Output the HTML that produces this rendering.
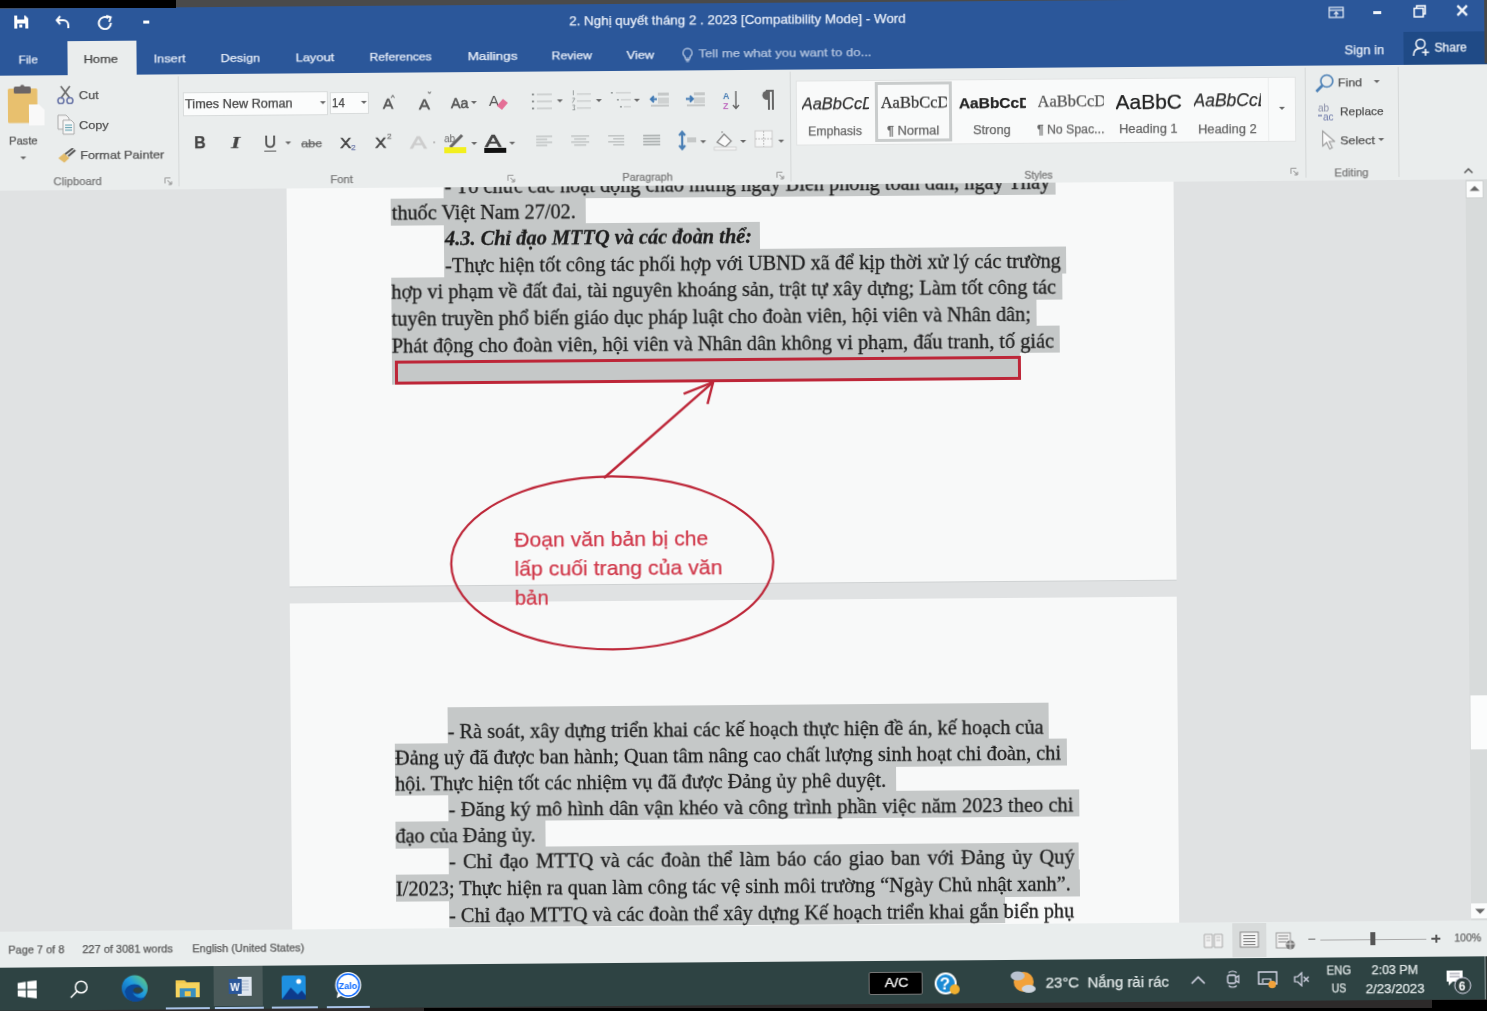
<!DOCTYPE html><html><head><meta charset="utf-8"><style>html,body{margin:0;padding:0;}body{width:1487px;height:1011px;overflow:hidden;background:#000;position:relative;}#bgtop{position:absolute;left:0;top:0;width:176px;height:7.5px;background:#000;z-index:5;}#bgbot{position:absolute;left:423.5px;top:1007.5px;width:1064px;height:4px;background:#000;z-index:5;}#bgbr{position:absolute;left:1432px;top:999.5px;width:55px;height:12px;background:#000;z-index:5;}#scr{position:absolute;left:0;top:0;width:1487px;height:1011px;transform:rotate(-0.44deg);transform-origin:743.5px 505.5px;filter:blur(0.45px);}.t{position:absolute;white-space:pre;line-height:1;transform-origin:0 0;-webkit-text-stroke-width:0.25px;}.b{position:absolute;}</style></head><body><div id="bgtop"></div><div id="bgbot"></div><div id="bgbr"></div><div id="scr"><div class="b" style="left:-20.0px;top:183.0px;width:1527.0px;height:744.0px;background:#e0e2e3;"></div><div class="b" style="left:289.2px;top:184.3px;width:887.0px;height:398.5px;background:#f8f9f9;"></div><div class="b" style="left:289.2px;top:582.8px;width:887.0px;height:1.2px;background:#cfd2d3;"></div><div class="b" style="left:289.2px;top:600.3px;width:887.0px;height:329.7px;background:#f8f9f9;"></div><div class="b" style="left:1468.0px;top:184.3px;width:39.0px;height:742.7px;background:#d8dbdb;"></div><div class="b" style="left:1468.0px;top:185.5px;width:18.0px;height:18.0px;background:#fbfcfc;border:1px solid #cfd2d2;box-sizing:border-box;"></div><div class="b" style="left:1468.5px;top:701.4px;width:18.5px;height:53.8px;background:#fbfcfc;"></div><div class="b" style="left:1468.0px;top:908.6px;width:18.0px;height:15.9px;background:#fbfcfc;"></div><div class="b" style="left:446.2px;top:169.7px;width:612.2px;height:27.1px;background:#c5c8c8;"></div><div class="b" style="left:392.8px;top:195.5px;width:195.3px;height:27.1px;background:#c5c8c8;"></div><div class="b" style="left:446.2px;top:222.0px;width:316.0px;height:27.1px;background:#c5c8c8;"></div><div class="b" style="left:446.2px;top:248.6px;width:621.5px;height:27.1px;background:#c5c8c8;"></div><div class="b" style="left:392.8px;top:275.1px;width:670.8px;height:27.1px;background:#c5c8c8;"></div><div class="b" style="left:392.8px;top:301.6px;width:645.2px;height:27.1px;background:#c5c8c8;"></div><div class="b" style="left:392.8px;top:328.2px;width:668.0px;height:27.1px;background:#c5c8c8;"></div><div class="b" style="left:392.8px;top:354.7px;width:628.2px;height:27.1px;background:#c5c8c8;"></div><div class="b" style="left:446.0px;top:705.0px;width:600.7px;height:37.1px;background:#c5c8c8;"></div><div class="b" style="left:392.6px;top:741.1px;width:672.6px;height:27.1px;background:#c5c8c8;"></div><div class="b" style="left:392.6px;top:766.3px;width:501.8px;height:27.1px;background:#c5c8c8;"></div><div class="b" style="left:446.0px;top:792.2px;width:631.0px;height:27.1px;background:#c5c8c8;"></div><div class="b" style="left:392.6px;top:818.6px;width:150.9px;height:27.1px;background:#c5c8c8;"></div><div class="b" style="left:446.0px;top:845.0px;width:630.0px;height:27.1px;background:#c5c8c8;"></div><div class="b" style="left:392.6px;top:871.8px;width:684.4px;height:27.1px;background:#c5c8c8;"></div><div class="b" style="left:446.0px;top:898.2px;width:555.6px;height:27.1px;background:#c5c8c8;"></div><div class="b" style="left:395.9px;top:357.8px;width:626.0px;height:23.8px;background:transparent;border:3px solid #bd2638;box-sizing:border-box;"></div><svg class="b" style="left:1472.0px;top:191.0px;" width="10" height="6" viewBox="0 0 10 6"><path d="M0 5.5L5 0.5 10 5.5z" fill="#666"/></svg><svg class="b" style="left:1472.0px;top:914.0px;" width="10" height="6" viewBox="0 0 10 6"><path d="M0 0.5L5 5.5 10 0.5z" fill="#666"/></svg><svg class="b" style="left:440.0px;top:370.0px;" width="340" height="290" viewBox="0 0 340 290"><ellipse cx="171.79999999999995" cy="191.79999999999995" rx="161" ry="86.5" stroke="#bd2638" stroke-width="2.2" fill="none"/><path d="M164.10000000000002 107L274.1 11.899999999999977" stroke="#bd2638" stroke-width="2.4" fill="none"/><path d="M244.5 23.399999999999977L274.1 11.899999999999977L268.29999999999995 33.69999999999999" stroke="#bd2638" stroke-width="2.4" fill="none"/></svg><div class="t" id="d0" style="left:446.9px;top:174.0px;font-size:20.3px;font-family:'Liberation Serif', serif;color:#1e1e1e;font-weight:normal;font-style:normal;transform:scaleX(1.0005);-webkit-text-stroke:0.3px #1e1e1e;">- Tổ chức các hoạt động chào mừng ngày Biên phòng toàn dân, ngày Thầy</div><div class="t" id="d1" style="left:393.6px;top:199.8px;font-size:20.3px;font-family:'Liberation Serif', serif;color:#1e1e1e;font-weight:normal;font-style:normal;transform:scaleX(0.9984);-webkit-text-stroke:0.3px #1e1e1e;">thuốc Việt Nam 27/02.</div><div class="t" id="d2" style="left:446.9px;top:226.3px;font-size:20.3px;font-family:'Liberation Serif', serif;color:#1e1e1e;font-weight:bold;font-style:italic;transform:scaleX(1.0039);-webkit-text-stroke:0.3px #1e1e1e;">4.3. Chỉ đạo MTTQ và các đoàn thể:</div><div class="t" id="d3" style="left:446.5px;top:252.9px;font-size:20.3px;font-family:'Liberation Serif', serif;color:#1e1e1e;font-weight:normal;font-style:normal;transform:scaleX(1.0004);-webkit-text-stroke:0.3px #1e1e1e;">-Thực hiện tốt công tác phối hợp với UBND xã để kịp thời xử lý các trường</div><div class="t" id="d4" style="left:393.3px;top:279.4px;font-size:20.3px;font-family:'Liberation Serif', serif;color:#1e1e1e;font-weight:normal;font-style:normal;transform:scaleX(0.9994);-webkit-text-stroke:0.3px #1e1e1e;">hợp vi phạm về đất đai, tài nguyên khoáng sản, trật tự xây dựng; Làm tốt công tác</div><div class="t" id="d5" style="left:393.3px;top:305.9px;font-size:20.3px;font-family:'Liberation Serif', serif;color:#1e1e1e;font-weight:normal;font-style:normal;transform:scaleX(0.9993);-webkit-text-stroke:0.3px #1e1e1e;">tuyên truyền phổ biến giáo dục pháp luật cho đoàn viên, hội viên và Nhân dân;</div><div class="t" id="d6" style="left:393.3px;top:332.5px;font-size:20.3px;font-family:'Liberation Serif', serif;color:#1e1e1e;font-weight:normal;font-style:normal;transform:scaleX(1.0007);-webkit-text-stroke:0.3px #1e1e1e;">Phát động cho đoàn viên, hội viên và Nhân dân không vi phạm, đấu tranh, tố giác</div><div class="t" id="e0" style="left:446.3px;top:719.3px;font-size:20.3px;font-family:'Liberation Serif', serif;color:#1e1e1e;font-weight:normal;font-style:normal;transform:scaleX(1.0009);-webkit-text-stroke:0.3px #1e1e1e;">- Rà soát, xây dựng triển khai các kế hoạch thực hiện đề án, kế hoạch của</div><div class="t" id="e1" style="left:393.3px;top:745.4px;font-size:20.3px;font-family:'Liberation Serif', serif;color:#1e1e1e;font-weight:normal;font-style:normal;transform:scaleX(1.0005);-webkit-text-stroke:0.3px #1e1e1e;">Đảng uỷ đã được ban hành; Quan tâm nâng cao chất lượng sinh hoạt chi đoàn, chi</div><div class="t" id="e2" style="left:393.3px;top:770.6px;font-size:20.3px;font-family:'Liberation Serif', serif;color:#1e1e1e;font-weight:normal;font-style:normal;transform:scaleX(0.9981);-webkit-text-stroke:0.3px #1e1e1e;">hội. Thực hiện tốt các nhiệm vụ đã được Đảng ủy phê duyệt.</div><div class="t" id="e3" style="left:446.3px;top:796.5px;font-size:20.3px;font-family:'Liberation Serif', serif;color:#1e1e1e;font-weight:normal;font-style:normal;word-spacing:0.468px;-webkit-text-stroke:0.3px #1e1e1e;">- Đăng ký mô hình dân vận khéo và công trình phần việc năm 2023 theo chi</div><div class="t" id="e4" style="left:393.3px;top:822.9px;font-size:20.3px;font-family:'Liberation Serif', serif;color:#1e1e1e;font-weight:normal;font-style:normal;transform:scaleX(0.9964);-webkit-text-stroke:0.3px #1e1e1e;">đạo của Đảng ủy.</div><div class="t" id="e5" style="left:446.3px;top:849.3px;font-size:20.3px;font-family:'Liberation Serif', serif;color:#1e1e1e;font-weight:normal;font-style:normal;word-spacing:2.097px;-webkit-text-stroke:0.3px #1e1e1e;">- Chỉ đạo MTTQ và các đoàn thể làm báo cáo giao ban với Đảng ủy Quý</div><div class="t" id="e6" style="left:393.3px;top:876.1px;font-size:20.3px;font-family:'Liberation Serif', serif;color:#1e1e1e;font-weight:normal;font-style:normal;transform:scaleX(1.0006);-webkit-text-stroke:0.3px #1e1e1e;">I/2023; Thực hiện ra quan làm công tác vệ sinh môi trường “Ngày Chủ nhật xanh”.</div><div class="t" id="e7" style="left:446.3px;top:902.5px;font-size:20.3px;font-family:'Liberation Serif', serif;color:#1e1e1e;font-weight:normal;font-style:normal;transform:scaleX(1.0023);-webkit-text-stroke:0.3px #1e1e1e;">- Chỉ đạo MTTQ và các đoàn thể xây dựng Kế hoạch triển khai gắn biển phụ</div><div class="t" id="an1" style="left:513.5px;top:526.7px;font-size:21px;font-family:'Liberation Sans', sans-serif;color:#d0384a;font-weight:normal;font-style:normal;transform:scaleX(1.0071);">Đoạn văn bản bị che</div><div class="t" id="an2" style="left:513.5px;top:555.7px;font-size:21px;font-family:'Liberation Sans', sans-serif;color:#d0384a;font-weight:normal;font-style:normal;transform:scaleX(1.0123);">lấp cuối trang của văn</div><div class="t" id="an3" style="left:513.5px;top:584.6px;font-size:21px;font-family:'Liberation Sans', sans-serif;color:#d0384a;font-weight:normal;font-style:normal;transform:scaleX(0.9701);">bản</div><div class="b" style="left:-20.0px;top:-20.0px;width:1527.0px;height:23.5px;background:#4a4a4a;"></div><div class="b" style="left:-20.0px;top:2.5px;width:1527.0px;height:68.7px;background:#2b579a;"></div><div class="b" style="left:1406.5px;top:37.3px;width:100.5px;height:32.9px;background:#1f4a86;"></div><div class="b" style="left:1487.6px;top:-20.0px;width:19.4px;height:89.4px;background:#474747;"></div><div class="b" style="left:70.6px;top:36.1px;width:69.0px;height:34.4px;background:#eaeded;"></div><div class="b" style="left:146.7px;top:16.0px;width:6.0px;height:2.5px;background:#fff;"></div><div class="b" style="left:1376.7px;top:16.2px;width:8.6px;height:2.5px;background:#f0f4fa;"></div><div class="b" style="left:-20.0px;top:70.2px;width:1527.0px;height:114.9px;background:#eaeded;"></div><div class="b" style="left:180.8px;top:72.0px;width:1.0px;height:110.0px;background:#d5d8d8;"></div><div class="b" style="left:793.4px;top:72.0px;width:1.0px;height:110.0px;background:#d5d8d8;"></div><div class="b" style="left:1307.6px;top:72.0px;width:1.0px;height:110.0px;background:#d5d8d8;"></div><div class="b" style="left:1401.0px;top:72.0px;width:1.0px;height:110.0px;background:#d5d8d8;"></div><div class="b" style="left:185.8px;top:88.4px;width:145.2px;height:23.2px;background:#fbfcfc;border:1px solid #d9dcdc;box-sizing:border-box;"></div><div class="b" style="left:332.6px;top:88.8px;width:39.7px;height:22.5px;background:#fbfcfc;border:1px solid #d9dcdc;box-sizing:border-box;"></div><div class="b" style="left:266.9px;top:146.6px;width:12.0px;height:1.2px;background:#555;"></div><div class="b" style="left:435.5px;top:139.0px;width:2.0px;height:2.0px;background:#bbb;"></div><div class="b" style="left:486.7px;top:145.7px;width:22.4px;height:4.9px;background:#111;"></div><div class="b" style="left:798.8px;top:81.0px;width:500.1px;height:64.7px;background:#f9fafa;border:1px solid #e2e4e4;box-sizing:border-box;"></div><div class="b" style="left:1270.6px;top:82.0px;width:1.0px;height:62.7px;background:#ebeded;"></div><div class="b" style="left:877.8px;top:82.8px;width:77.3px;height:60.5px;background:transparent;border:3px solid #c9cccc;box-sizing:border-box;"></div><div class="b" style="left:-20.0px;top:926.0px;width:1527.0px;height:36.5px;background:#e9eded;"></div><div class="b" style="left:1228.7px;top:926.9px;width:33.9px;height:34.6px;background:#d8dbdb;"></div><div class="b" style="left:1304.5px;top:942.5px;width:7.0px;height:1.8px;background:#666;"></div><div class="b" style="left:1316.5px;top:943.5px;width:106.9px;height:1.0px;background:#aaa;"></div><div class="b" style="left:1367.4px;top:936.7px;width:5.0px;height:13.0px;background:#555;"></div><div class="b" style="left:1428.4px;top:943.0px;width:8.9px;height:1.8px;background:#555;"></div><div class="b" style="left:1431.9px;top:939.8px;width:1.8px;height:8.0px;background:#555;"></div><div class="b" style="left:-20.0px;top:1004.0px;width:1527.0px;height:26.0px;background:#2d2a2a;"></div><div class="b" style="left:-20.0px;top:961.5px;width:1527.0px;height:43.3px;background:#2e4343;"></div><div class="b" style="left:210.4px;top:961.5px;width:48.4px;height:40.5px;background:#4a5a5a;"></div><div class="b" style="left:162.0px;top:1002.5px;width:44.0px;height:2.5px;background:#a9c4e8;"></div><div class="b" style="left:211.3px;top:1002.5px;width:48.7px;height:2.5px;background:#a9c4e8;"></div><div class="b" style="left:268.3px;top:1002.5px;width:45.4px;height:2.5px;background:#a9c4e8;"></div><div class="b" style="left:323.0px;top:1002.5px;width:43.3px;height:2.5px;background:#a9c4e8;"></div><div class="b" style="left:865.2px;top:972.5px;width:54.3px;height:23.3px;background:#000;border:1px solid #777;box-sizing:border-box;border-radius:2px;"></div><div class="b" style="left:1481.3px;top:961.5px;width:1.0px;height:43.5px;background:#8a9a9a;"></div><div class="b" style="left:1482.3px;top:961.5px;width:24.7px;height:43.5px;background:#283232;"></div><svg class="b" style="left:17.0px;top:9.0px;" width="16" height="15" viewBox="0 0 16 15"><path d="M1 1h11l3 3v10H1z" fill="#fff"/><rect x="4" y="1" width="7" height="4" fill="#2b579a"/><rect x="4" y="9" width="8" height="5" fill="#2b579a"/><rect x="6" y="10" width="3" height="3" fill="#fff"/></svg><svg class="b" style="left:59.0px;top:9.0px;" width="16" height="15" viewBox="0 0 16 15"><path d="M5 2L1.5 6 5 10" stroke="#fff" stroke-width="2" fill="none"/><path d="M2 6h6a5 5 0 0 1 5 5v3" stroke="#fff" stroke-width="2" fill="none"/></svg><svg class="b" style="left:101.0px;top:9.5px;" width="16" height="15" viewBox="0 0 16 15"><path d="M11 3.2A6 6 0 1 0 13.6 8" stroke="#fff" stroke-width="2" fill="none"/><path d="M9 1l4.5 1.5L12 7" stroke="#fff" stroke-width="2" fill="none"/></svg><svg class="b" style="left:1331.5px;top:10.5px;" width="16" height="12" viewBox="0 0 16 12"><rect x="1" y="1" width="14" height="10" stroke="#e8eef8" stroke-width="1.2" fill="none"/><path d="M1 3.8h14" stroke="#e8eef8" stroke-width="1.2"/><path d="M8 10.5V5.5M5.8 7.8L8 5.5l2.2 2.3" stroke="#e8eef8" stroke-width="1.2" fill="none"/></svg><svg class="b" style="left:1417.0px;top:10.0px;" width="13" height="13" viewBox="0 0 13 13"><rect x="1" y="3.5" width="9" height="8.5" stroke="#fff" stroke-width="1.5" fill="none"/><path d="M3.5 3.5V1h8.5v8H10" stroke="#fff" stroke-width="1.5" fill="none"/></svg><svg class="b" style="left:1459.5px;top:10.2px;" width="12" height="12" viewBox="0 0 12 12"><path d="M1.2 1.2l9.6 9.6M10.8 1.2L1.2 10.8" stroke="#f0f4fa" stroke-width="2.4"/></svg><svg class="b" style="left:1416.0px;top:43.0px;" width="18" height="19" viewBox="0 0 18 19"><circle cx="8" cy="6" r="4.5" stroke="#fff" stroke-width="1.5" fill="none"/><path d="M1 18c0-5 3-7.5 7-7.5" stroke="#fff" stroke-width="1.5" fill="none"/><path d="M13 11v7M9.5 14.5h7" stroke="#fff" stroke-width="1.5"/></svg><svg class="b" style="left:685.0px;top:46.5px;" width="12" height="15" viewBox="0 0 12 15"><path d="M6 1a4.5 4.5 0 0 0-2.5 8.2V11h5V9.2A4.5 4.5 0 0 0 6 1z" stroke="#c9d6ea" stroke-width="1.1" fill="none"/><path d="M3.8 12.5h4.4M4.5 14h3" stroke="#c9d6ea" stroke-width="1.1"/></svg><svg class="b" style="left:10.0px;top:79.0px;" width="40" height="43" viewBox="0 0 40 43"><rect x="1" y="4" width="29.5" height="34.5" rx="1.5" fill="#e8c06e"/><rect x="7" y="2" width="17" height="7" rx="1.5" fill="#6b6566"/><circle cx="15.5" cy="2.5" r="2.2" fill="#6b6566"/><path d="M22 20h10l5.5 5.5V41H22z" fill="#f9f9f9"/></svg><svg class="b" style="left:23.0px;top:150.5px;" width="6" height="3.5" viewBox="0 0 6 3.5"><path d="M0 0h6L3 3z" fill="#666"/></svg><svg class="b" style="left:60.0px;top:80.0px;" width="18" height="19" viewBox="0 0 18 19"><path d="M4 1l9 12M13 1L4 13" stroke="#666" stroke-width="1.6"/><circle cx="4" cy="15.5" r="3" stroke="#6a76a8" stroke-width="1.6" fill="none"/><circle cx="13" cy="15.5" r="3" stroke="#6a76a8" stroke-width="1.6" fill="none"/></svg><svg class="b" style="left:60.0px;top:109.0px;" width="18" height="21" viewBox="0 0 18 21"><path d="M1 1h8l3 3v11H1z" stroke="#aaa" fill="#f4f4f4"/><path d="M6 6h8l3 3v11H6z" stroke="#aaa" fill="#f8f8f8"/><path d="M8 11h7M8 13.5h7M8 16h7" stroke="#59a" stroke-width="1"/></svg><svg class="b" style="left:59.5px;top:142.5px;" width="19" height="15" viewBox="0 0 19 15"><path d="M1 10l6-5 5 5-5 4.5z" fill="#e2bb6a"/><path d="M8 6l8-6M11 8l7-6" stroke="#555" stroke-width="2"/></svg><svg class="b" style="left:167.0px;top:172.5px;" width="8" height="8" viewBox="0 0 8 8"><path d="M0.5 6V0.5H6" stroke="#999" fill="none"/><path d="M3 3l4 4M7 4v3H4" stroke="#888" fill="none"/></svg><svg class="b" style="left:510.0px;top:172.5px;" width="8" height="8" viewBox="0 0 8 8"><path d="M0.5 6V0.5H6" stroke="#999" fill="none"/><path d="M3 3l4 4M7 4v3H4" stroke="#888" fill="none"/></svg><svg class="b" style="left:779.0px;top:172.0px;" width="8" height="8" viewBox="0 0 8 8"><path d="M0.5 6V0.5H6" stroke="#999" fill="none"/><path d="M3 3l4 4M7 4v3H4" stroke="#888" fill="none"/></svg><svg class="b" style="left:1292.5px;top:171.7px;" width="8" height="8" viewBox="0 0 8 8"><path d="M0.5 6V0.5H6" stroke="#999" fill="none"/><path d="M3 3l4 4M7 4v3H4" stroke="#888" fill="none"/></svg><svg class="b" style="left:322.6px;top:97.5px;" width="6" height="3.5" viewBox="0 0 6 3.5"><path d="M0 0h6L3 3z" fill="#666"/></svg><svg class="b" style="left:364.4px;top:98.0px;" width="6" height="3.5" viewBox="0 0 6 3.5"><path d="M0 0h6L3 3z" fill="#666"/></svg><svg class="b" style="left:287.9px;top:138.0px;" width="6" height="3.5" viewBox="0 0 6 3.5"><path d="M0 0h6L3 3z" fill="#666"/></svg><svg class="b" style="left:474.4px;top:98.5px;" width="6" height="3.5" viewBox="0 0 6 3.5"><path d="M0 0h6L3 3z" fill="#666"/></svg><svg class="b" style="left:491.0px;top:89.0px;" width="22" height="20" viewBox="0 0 22 20"><text x="1" y="15" font-family="Liberation Sans" font-size="15" fill="#555">A</text><path d="M9 15l6-7 5 4-6 7z" fill="#e46f96"/></svg><svg class="b" style="left:446.0px;top:130.0px;" width="25" height="22" viewBox="0 0 25 22"><text x="1" y="10" font-family="Liberation Sans" font-size="10" fill="#666">ab</text><path d="M7 15l12-12" stroke="#666" stroke-width="3"/><rect x="1" y="15" width="22" height="6" fill="#f2ef1e"/></svg><svg class="b" style="left:473.8px;top:139.5px;" width="6" height="3.5" viewBox="0 0 6 3.5"><path d="M0 0h6L3 3z" fill="#666"/></svg><svg class="b" style="left:512.4px;top:139.5px;" width="6" height="3.5" viewBox="0 0 6 3.5"><path d="M0 0h6L3 3z" fill="#666"/></svg><svg class="b" style="left:535.0px;top:90.0px;" width="21" height="20" viewBox="0 0 21 20"><rect x="5" y="2" width="15" height="1.6" fill="#c9cccc"/><rect x="5" y="9" width="15" height="1.6" fill="#c9cccc"/><rect x="5" y="16" width="15" height="1.6" fill="#c9cccc"/></svg><svg class="b" style="left:535.0px;top:89.5px;" width="21" height="20" viewBox="0 0 21 20"><rect x="0" y="2" width="2.2" height="1.6" fill="#7a7f7f"/><rect x="0" y="9" width="2.2" height="1.6" fill="#7a7f7f"/><rect x="0" y="16" width="2.2" height="1.6" fill="#7a7f7f"/></svg><svg class="b" style="left:559.7px;top:97.5px;" width="6" height="3.5" viewBox="0 0 6 3.5"><path d="M0 0h6L3 3z" fill="#666"/></svg><svg class="b" style="left:574.0px;top:90.0px;" width="21" height="20" viewBox="0 0 21 20"><rect x="6" y="2" width="14" height="1.6" fill="#cfd2d2"/><rect x="6" y="9" width="14" height="1.6" fill="#cfd2d2"/><rect x="6" y="16" width="14" height="1.6" fill="#cfd2d2"/></svg><svg class="b" style="left:574.0px;top:88.0px;" width="6" height="22" viewBox="0 0 6 22"><path d="M2.5 1v5M1.5 9h2.5l-2.5 4.5M1.5 16h2.5l-1 2 1 2.5h-2.5" stroke="#9aa0a0" stroke-width="1" fill="none"/></svg><svg class="b" style="left:598.5px;top:97.5px;" width="6" height="3.5" viewBox="0 0 6 3.5"><path d="M0 0h6L3 3z" fill="#666"/></svg><svg class="b" style="left:614.0px;top:90.0px;" width="21" height="20" viewBox="0 0 21 20"><rect x="5" y="1" width="15" height="1.6" fill="#d2d5d5"/><rect x="10" y="8" width="10" height="1.6" fill="#d2d5d5"/><rect x="13" y="15" width="7" height="1.6" fill="#d2d5d5"/></svg><svg class="b" style="left:614.0px;top:89.5px;" width="21" height="20" viewBox="0 0 21 20"><rect x="0" y="1" width="2" height="1.6" fill="#9aa0a0"/><rect x="6" y="8" width="2" height="1.6" fill="#9aa0a0"/><rect x="9" y="15" width="2" height="1.6" fill="#9aa0a0"/></svg><svg class="b" style="left:636.6px;top:97.5px;" width="6" height="3.5" viewBox="0 0 6 3.5"><path d="M0 0h6L3 3z" fill="#666"/></svg><svg class="b" style="left:652.0px;top:92.0px;" width="21" height="15" viewBox="0 0 21 15"><rect x="9" y="0" width="11" height="3" fill="#c5c8c8"/><rect x="9" y="5" width="11" height="6" fill="#cfd2d2"/><rect x="2" y="12" width="18" height="2" fill="#c5c8c8"/><path d="M8 6.5H2M5 3.5L2 6.5 5 9.5" stroke="#3e78b4" stroke-width="2" fill="none"/></svg><svg class="b" style="left:688.0px;top:92.0px;" width="21" height="15" viewBox="0 0 21 15"><rect x="9" y="0" width="11" height="3" fill="#c5c8c8"/><rect x="9" y="5" width="11" height="6" fill="#cfd2d2"/><rect x="2" y="12" width="18" height="2" fill="#c5c8c8"/><path d="M1 6.5h7M5 3.5L8 6.5 5 9.5" stroke="#3e78b4" stroke-width="2" fill="none"/></svg><svg class="b" style="left:726.0px;top:90.0px;" width="17" height="20" viewBox="0 0 17 20"><text x="0" y="9" font-family="Liberation Sans" font-size="9" font-weight="bold" fill="#4a7fb5">A</text><text x="0" y="19" font-family="Liberation Sans" font-size="9" font-weight="bold" fill="#c06fc0">Z</text><path d="M13 1v17M10 15l3 3.5 3-3.5" stroke="#666" stroke-width="1.4" fill="none"/></svg><svg class="b" style="left:763.0px;top:89.5px;" width="15" height="20" viewBox="0 0 15 20"><path d="M6 1h8M9 1v19M13 1v19" stroke="#666" stroke-width="2" fill="none"/><path d="M7 1a4.5 4.5 0 0 0 0 9h2V1z" fill="#666"/></svg><svg class="b" style="left:538.5px;top:133.0px;" width="17" height="20" viewBox="0 0 17 20"><rect x="0" y="1" width="16" height="1.6" fill="#c3c7c7"/><rect x="0" y="4" width="11" height="1.6" fill="#c3c7c7"/><rect x="0" y="7" width="16" height="1.6" fill="#c3c7c7"/><rect x="0" y="10" width="11" height="1.6" fill="#c3c7c7"/></svg><svg class="b" style="left:573.5px;top:133.0px;" width="19" height="20" viewBox="0 0 19 20"><rect x="0" y="1" width="18" height="1.6" fill="#c3c7c7"/><rect x="3" y="4" width="12" height="1.6" fill="#c3c7c7"/><rect x="0" y="7" width="18" height="1.6" fill="#c3c7c7"/><rect x="3" y="10" width="12" height="1.6" fill="#c3c7c7"/></svg><svg class="b" style="left:610.5px;top:133.0px;" width="17" height="20" viewBox="0 0 17 20"><rect x="0" y="1" width="16" height="1.6" fill="#c3c7c7"/><rect x="5" y="4" width="11" height="1.6" fill="#c3c7c7"/><rect x="0" y="7" width="16" height="1.6" fill="#c3c7c7"/><rect x="5" y="10" width="11" height="1.6" fill="#c3c7c7"/></svg><svg class="b" style="left:646.0px;top:133.0px;" width="18" height="20" viewBox="0 0 18 20"><rect x="0" y="1" width="17" height="1.6" fill="#a9aeae"/><rect x="0" y="4" width="17" height="1.6" fill="#a9aeae"/><rect x="0" y="7" width="17" height="1.6" fill="#a9aeae"/><rect x="0" y="10" width="17" height="1.6" fill="#a9aeae"/></svg><svg class="b" style="left:680.0px;top:129.5px;" width="26" height="20" viewBox="0 0 26 20"><path d="M5 2v16M2 5l3-3.5 3 3.5M2 15l3 3.5 3-3.5" stroke="#4a7fb5" stroke-width="2.2" fill="none"/><rect x="10" y="7" width="9" height="5" fill="#c5c8c8"/></svg><svg class="b" style="left:702.9px;top:139.5px;" width="6" height="3.5" viewBox="0 0 6 3.5"><path d="M0 0h6L3 3z" fill="#666"/></svg><svg class="b" style="left:716.0px;top:130.0px;" width="24" height="21" viewBox="0 0 24 21"><path d="M4 12l7-8 7 7-6 6z" stroke="#888" stroke-width="1.3" fill="#fafafa"/><path d="M9 3V1" stroke="#888"/><rect x="1" y="17" width="22" height="3" fill="#f4f4f4" stroke="#ccc" stroke-width="0.8"/></svg><svg class="b" style="left:742.9px;top:139.5px;" width="6" height="3.5" viewBox="0 0 6 3.5"><path d="M0 0h6L3 3z" fill="#666"/></svg><svg class="b" style="left:757.0px;top:130.0px;" width="20" height="19" viewBox="0 0 20 19"><rect x="1" y="1" width="17" height="16" fill="#f6f7f7" stroke="#ccc"/><path d="M9.5 1v16M1 9h17" stroke="#bbb" stroke-dasharray="2 1"/></svg><svg class="b" style="left:780.9px;top:139.5px;" width="6" height="3.5" viewBox="0 0 6 3.5"><path d="M0 0h6L3 3z" fill="#666"/></svg><svg class="b" style="left:1282.4px;top:110.6px;" width="6" height="3.5" viewBox="0 0 6 3.5"><path d="M0 0h6L3 3z" fill="#666"/></svg><svg class="b" style="left:1318.0px;top:77.5px;" width="20" height="20" viewBox="0 0 20 20"><circle cx="12" cy="7.5" r="6" stroke="#4a7fb5" stroke-width="1.6" fill="none"/><path d="M7.5 12L1.5 18" stroke="#4a7fb5" stroke-width="2.6"/></svg><svg class="b" style="left:1377.3px;top:85.3px;" width="6" height="3.5" viewBox="0 0 6 3.5"><path d="M0 0h6L3 3z" fill="#666"/></svg><svg class="b" style="left:1319.5px;top:106.5px;" width="21" height="19" viewBox="0 0 21 19"><text x="1" y="9" font-family="Liberation Sans" font-size="10" fill="#8a8fa8">ab</text><text x="6" y="18" font-family="Liberation Sans" font-size="10" fill="#6a76a8">ac</text><path d="M1 13h4" stroke="#6a76a8" stroke-width="1.3"/></svg><svg class="b" style="left:1323.5px;top:134.0px;" width="14" height="21" viewBox="0 0 14 21"><path d="M1.5 1.5v15l4-3.5 3 6.5 2.5-1.2-3-6.3h5.5z" stroke="#9a9a9a" stroke-width="1.1" fill="#fafafa"/></svg><svg class="b" style="left:1381.4px;top:143.1px;" width="6" height="3.5" viewBox="0 0 6 3.5"><path d="M0 0h6L3 3z" fill="#666"/></svg><svg class="b" style="left:1465.5px;top:172.5px;" width="10" height="6" viewBox="0 0 10 6"><path d="M1 5.5L5 1.5 9 5.5" stroke="#555" stroke-width="1.5" fill="none"/></svg><svg class="b" style="left:1199.5px;top:935.5px;" width="20" height="16" viewBox="0 0 20 16"><path d="M1 2h8v13H1zM11 2h8v13h-8z" stroke="#aaa" fill="#f2f2f2"/><path d="M3 5h4M3 8h4M13 5h4M13 8h4" stroke="#bbb"/></svg><svg class="b" style="left:1236.0px;top:935.0px;" width="20" height="17" viewBox="0 0 20 17"><rect x="1" y="1" width="18" height="15" stroke="#888" fill="#f4f4f4"/><path d="M4 4.5h12M4 7.5h12M4 10.5h12M4 13.5h12" stroke="#777"/></svg><svg class="b" style="left:1271.5px;top:936.0px;" width="20" height="18" viewBox="0 0 20 18"><rect x="1" y="1" width="14" height="15" stroke="#999" fill="#f4f4f4"/><path d="M3 4h10M3 7h10M3 10h8" stroke="#888"/><circle cx="15" cy="13" r="4.5" fill="#777"/><path d="M11 12h8M15 8.5v9" stroke="#eee" stroke-width="0.9"/></svg><svg class="b" style="left:13.5px;top:975.0px;" width="19" height="18" viewBox="0 0 19 18"><path d="M0 2.5l8-1.2v7.2H0zM9.5 1.1L19 0v8.5H9.5zM0 9.8h8V17L0 15.8zM9.5 9.8H19V18l-9.5-1.2z" fill="#fff"/></svg><svg class="b" style="left:66.0px;top:975.0px;" width="19" height="18" viewBox="0 0 19 18"><circle cx="11.5" cy="7" r="5.8" stroke="#fff" stroke-width="1.5" fill="none"/><path d="M7.2 11.3L1 17.5" stroke="#fff" stroke-width="1.6"/></svg><svg class="b" style="left:117.0px;top:970.0px;" width="28" height="27" viewBox="0 0 28 27"><defs><linearGradient id="eg" x1="0" y1="1" x2="1" y2="0"><stop offset="0" stop-color="#0a4fa8"/><stop offset="0.55" stop-color="#1e9be0"/><stop offset="1" stop-color="#6fd36a"/></linearGradient></defs><circle cx="14" cy="13.5" r="13" fill="url(#eg)"/><path d="M4 17c1-6 8-9 13-7 3 1 5 4 4 7-2 3-6 3-9 1 2 5 8 7 13 4-4 6-14 7-19 1z" fill="#0b4a9c"/><ellipse cx="17.5" cy="15.5" rx="5" ry="3" fill="#2e4343"/></svg><svg class="b" style="left:171.5px;top:972.5px;" width="24" height="20" viewBox="0 0 24 20"><path d="M0 3h9l2 2h13v15H0z" fill="#f2c94c"/><rect x="0" y="6" width="24" height="14" fill="#f7d45e"/><rect x="4" y="11" width="16" height="9" fill="#3a8fc0"/><rect x="9" y="14" width="6" height="5" fill="#f2c94c"/></svg><svg class="b" style="left:225.0px;top:972.0px;" width="24" height="21" viewBox="0 0 24 21"><rect x="9" y="1" width="14" height="19" fill="#dfe6ef"/><path d="M12 5h8M12 8h8M12 11h8M12 14h8" stroke="#9fb0c8"/><rect x="0" y="3" width="13" height="15" fill="#2b579a"/><text x="1.5" y="14.5" font-family="Liberation Sans" font-size="10" font-weight="bold" fill="#fff">W</text></svg><svg class="b" style="left:278.0px;top:971.5px;" width="24" height="24" viewBox="0 0 24 24"><rect x="0" y="0" width="24" height="24" rx="2" fill="#1e90e0"/><path d="M0 24l9-12 7 7 4-4 4 5v4z" fill="#0d3a8c"/><circle cx="17" cy="6" r="2.5" fill="#fff"/></svg><svg class="b" style="left:331.0px;top:969.0px;" width="27" height="27" viewBox="0 0 27 27"><circle cx="13.5" cy="13" r="13" fill="#fff"/><path d="M3 21l-1 5 6-3z" fill="#fff"/><circle cx="13.5" cy="13" r="11" fill="#fff" stroke="#0a68ff" stroke-width="1.5"/><text x="4" y="16.5" font-family="Liberation Sans" font-size="9" font-weight="bold" fill="#0a68ff">Zalo</text></svg><svg class="b" style="left:929.5px;top:972.5px;" width="27" height="24" viewBox="0 0 27 24"><circle cx="12" cy="12" r="11" fill="#fff"/><circle cx="12" cy="12" r="9" fill="#1a8ad4"/><text x="6" y="18" font-family="Liberation Sans" font-size="17" font-weight="bold" fill="#fff">?</text><circle cx="21" cy="18" r="5" fill="#f0b030"/></svg><svg class="b" style="left:1006.0px;top:969.5px;" width="27" height="27" viewBox="0 0 27 27"><circle cx="14" cy="14" r="10" fill="#f2a23a"/><ellipse cx="8" cy="8" rx="7" ry="4.5" fill="#b9c2cf"/><ellipse cx="19" cy="21" rx="7" ry="4" fill="#cfd6df"/></svg><svg class="b" style="left:1186.5px;top:979.0px;" width="15" height="9" viewBox="0 0 15 9"><path d="M1 8L7.5 1.5 14 8" stroke="#dde" stroke-width="1.5" fill="none"/></svg><svg class="b" style="left:1222.5px;top:974.0px;" width="13" height="18" viewBox="0 0 13 18"><rect x="1" y="5" width="8" height="8" rx="1.5" stroke="#dde" stroke-width="1.3" fill="none"/><path d="M9 7.5l3-2v7l-3-2" stroke="#dde" stroke-width="1.2" fill="none"/><path d="M2 2.5c2-2 6-2 8 0M2 15.5c2 2 6 2 8 0" stroke="#dde" stroke-width="1.2" fill="none"/></svg><svg class="b" style="left:1253.5px;top:973.5px;" width="21" height="19" viewBox="0 0 21 19"><rect x="1" y="2" width="18" height="12" stroke="#dde" stroke-width="1.4" fill="none"/><path d="M5 13v-4h8v4" stroke="#dde" stroke-width="1.2" fill="none"/><circle cx="14.5" cy="14.5" r="3.8" fill="#f2a23a"/></svg><svg class="b" style="left:1289.5px;top:975.5px;" width="16" height="15" viewBox="0 0 16 15"><path d="M1 5h3l4-4v13l-4-4H1z" stroke="#dde" stroke-width="1.2" fill="none"/><path d="M10 5l5 5M15 5l-5 5" stroke="#dde" stroke-width="1.2"/></svg><svg class="b" style="left:1441.5px;top:975.0px;" width="27" height="25" viewBox="0 0 27 25"><path d="M1 1h16v11H7l-4 4v-4H1z" fill="#fff"/><path d="M4 4h10M4 7h10" stroke="#889"/><circle cx="17" cy="16" r="8" fill="#2f3e3e" stroke="#dde" stroke-width="1"/><text x="13" y="20.5" font-family="Liberation Sans" font-size="12" font-weight="bold" fill="#fff">6</text></svg><div class="t" id="title" style="left:572.5px;top:13.1px;font-size:13.5px;font-family:'Liberation Sans', sans-serif;color:#e8eef8;font-weight:normal;font-style:normal;transform:scaleX(0.9906);">2. Nghị quyết tháng 2 . 2023 [Compatibility Mode] - Word</div><div class="t" id="signin" style="left:1347.7px;top:48.6px;font-size:12px;font-family:'Liberation Sans', sans-serif;color:#e8eef8;font-weight:normal;font-style:normal;transform:scaleX(1.0844);">Sign in</div><div class="t" id="share" style="left:1438.2px;top:47.4px;font-size:12px;font-family:'Liberation Sans', sans-serif;color:#f0f4fa;font-weight:normal;font-style:normal;transform:scaleX(1.0053);">Share</div><div class="t" id="tFile" style="left:21.9px;top:48.8px;font-size:11.8px;font-family:'Liberation Sans', sans-serif;color:#e8eef8;font-weight:normal;font-style:normal;transform:scaleX(1.0150);">File</div><div class="t" id="tHome" style="left:87.4px;top:48.8px;font-size:11.8px;font-family:'Liberation Sans', sans-serif;color:#444;font-weight:normal;font-style:normal;transform:scaleX(1.0963);">Home</div><div class="t" id="tInsert" style="left:157.2px;top:48.8px;font-size:11.8px;font-family:'Liberation Sans', sans-serif;color:#e8eef8;font-weight:normal;font-style:normal;transform:scaleX(1.0842);">Insert</div><div class="t" id="tDesign" style="left:224.3px;top:48.8px;font-size:11.8px;font-family:'Liberation Sans', sans-serif;color:#e8eef8;font-weight:normal;font-style:normal;transform:scaleX(1.0807);">Design</div><div class="t" id="tLayout" style="left:299.3px;top:48.8px;font-size:11.8px;font-family:'Liberation Sans', sans-serif;color:#e8eef8;font-weight:normal;font-style:normal;transform:scaleX(1.0925);">Layout</div><div class="t" id="tRef" style="left:373.3px;top:48.8px;font-size:11.8px;font-family:'Liberation Sans', sans-serif;color:#e8eef8;font-weight:normal;font-style:normal;transform:scaleX(1.0294);">References</div><div class="t" id="tMail" style="left:470.8px;top:48.8px;font-size:11.8px;font-family:'Liberation Sans', sans-serif;color:#e8eef8;font-weight:normal;font-style:normal;transform:scaleX(1.1552);">Mailings</div><div class="t" id="tReview" style="left:554.7px;top:48.8px;font-size:11.8px;font-family:'Liberation Sans', sans-serif;color:#e8eef8;font-weight:normal;font-style:normal;transform:scaleX(1.0443);">Review</div><div class="t" id="tView" style="left:630.1px;top:48.8px;font-size:11.8px;font-family:'Liberation Sans', sans-serif;color:#e8eef8;font-weight:normal;font-style:normal;transform:scaleX(1.0884);">View</div><div class="t" id="tell" style="left:702.0px;top:48.3px;font-size:11.8px;font-family:'Liberation Sans', sans-serif;color:#b7c7e0;font-weight:normal;font-style:normal;transform:scaleX(1.1132);">Tell me what you want to do...</div><div class="t" id="paste" style="left:11.6px;top:129.9px;font-size:11.8px;font-family:'Liberation Sans', sans-serif;color:#505050;font-weight:normal;font-style:normal;transform:scaleX(0.9413);">Paste</div><div class="t" id="cut" style="left:82.0px;top:84.7px;font-size:11.8px;font-family:'Liberation Sans', sans-serif;color:#505050;font-weight:normal;font-style:normal;transform:scaleX(1.0785);">Cut</div><div class="t" id="copy" style="left:82.0px;top:115.0px;font-size:11.8px;font-family:'Liberation Sans', sans-serif;color:#505050;font-weight:normal;font-style:normal;transform:scaleX(1.0782);">Copy</div><div class="t" id="fp" style="left:82.6px;top:144.9px;font-size:11.8px;font-family:'Liberation Sans', sans-serif;color:#505050;font-weight:normal;font-style:normal;transform:scaleX(1.0778);">Format Painter</div><div class="t" id="lblClip" style="left:55.7px;top:171.4px;font-size:11.3px;font-family:'Liberation Sans', sans-serif;color:#777;font-weight:normal;font-style:normal;transform:scaleX(0.9967);">Clipboard</div><div class="t" id="fontname" style="left:187.6px;top:93.9px;font-size:12.3px;font-family:'Liberation Sans', sans-serif;color:#444;font-weight:normal;font-style:normal;transform:scaleX(1.0346);">Times New Roman</div><div class="t" id="fontsize" style="left:334.7px;top:93.9px;font-size:12.3px;font-family:'Liberation Sans', sans-serif;color:#444;font-weight:normal;font-style:normal;transform:scaleX(0.9352);">14</div><div class="t" id="bB" style="left:197.3px;top:131.2px;font-size:16px;font-family:'Liberation Sans', sans-serif;color:#444;font-weight:bold;font-style:normal;transform:scaleX(0.9946);">B</div><div class="t" id="bI" style="left:233.5px;top:131.3px;font-size:16px;font-family:'Liberation Serif', serif;color:#444;font-weight:bold;font-style:italic;transform:scaleX(1.4436);">I</div><div class="t" id="bU" style="left:266.9px;top:131.2px;font-size:16px;font-family:'Liberation Sans', sans-serif;color:#444;font-weight:normal;font-style:normal;transform:scaleX(1.0378);">U</div><div class="t" id="babc" style="left:303.8px;top:134.7px;font-size:11.5px;font-family:'Liberation Sans', sans-serif;color:#666;font-weight:normal;font-style:normal;transform:scaleX(1.1107);text-decoration:line-through;">abc</div><div class="t" id="bx2" style="left:342.5px;top:132.3px;font-size:15px;font-family:'Liberation Sans', sans-serif;color:#444;font-weight:normal;font-style:normal;transform:scaleX(1.0983);-webkit-text-stroke:0.5px #444;">X</div><div class="t" id="bx2s" style="left:354.0px;top:141.2px;font-size:8px;font-family:'Liberation Sans', sans-serif;color:#6a76a8;font-weight:normal;font-style:normal;">2</div><div class="t" id="growA" style="left:385.6px;top:94.3px;font-size:14px;font-family:'Liberation Sans', sans-serif;color:#555;font-weight:normal;font-style:normal;transform:scaleX(1.1023);-webkit-text-stroke:0.5px #555;">A</div><div class="t" id="growc" style="left:394.0px;top:91.2px;font-size:8px;font-family:'Liberation Sans', sans-serif;color:#555;font-weight:normal;font-style:normal;">^</div><div class="t" id="shrA" style="left:421.9px;top:94.6px;font-size:14px;font-family:'Liberation Sans', sans-serif;color:#555;font-weight:normal;font-style:normal;transform:scaleX(1.1773);-webkit-text-stroke:0.5px #555;">A</div><div class="t" id="shrc" style="left:431.0px;top:89.5px;font-size:10px;font-family:'Liberation Sans', sans-serif;color:#555;font-weight:normal;font-style:normal;">ˇ</div><div class="t" id="Aa" style="left:453.9px;top:94.2px;font-size:14px;font-family:'Liberation Sans', sans-serif;color:#555;font-weight:normal;font-style:normal;transform:scaleX(1.0277);-webkit-text-stroke:0.5px #555;">Aa</div><div class="t" id="bX2" style="left:378.3px;top:132.2px;font-size:15px;font-family:'Liberation Sans', sans-serif;color:#444;font-weight:normal;font-style:normal;transform:scaleX(1.0983);-webkit-text-stroke:0.5px #444;">X</div><div class="t" id="bX2s" style="left:390.0px;top:130.2px;font-size:8px;font-family:'Liberation Sans', sans-serif;color:#777;font-weight:normal;font-style:normal;">2</div><div class="t" id="teA" style="left:413.4px;top:131.7px;font-size:17px;font-family:'Liberation Sans', sans-serif;color:#ccc;font-weight:normal;font-style:normal;transform:scaleX(1.4457);-webkit-text-stroke:0.6px #ccc;">A</div><div class="t" id="fcA" style="left:488.0px;top:131.3px;font-size:17px;font-family:'Liberation Sans', sans-serif;color:#444;font-weight:normal;font-style:normal;transform:scaleX(1.4105);-webkit-text-stroke:0.7px #444;">A</div><div class="t" id="lblFont" style="left:333.1px;top:171.2px;font-size:11.3px;font-family:'Liberation Sans', sans-serif;color:#777;font-weight:normal;font-style:normal;transform:scaleX(0.9907);">Font</div><div class="t" id="lblPara" style="left:625.2px;top:171.2px;font-size:11.3px;font-family:'Liberation Sans', sans-serif;color:#777;font-weight:normal;font-style:normal;transform:scaleX(0.9533);">Paragraph</div><div class="t" id="stE" style="left:804.7px;top:96.0px;font-size:16.5px;font-family:'Liberation Sans', sans-serif;color:#333;font-weight:normal;font-style:italic;width:67px;overflow:hidden;">AaBbCcDd</div><div class="t" id="stEl" style="left:811.4px;top:125.5px;font-size:12px;font-family:'Liberation Sans', sans-serif;color:#666;font-weight:normal;font-style:normal;transform:scaleX(1.0211);">Emphasis</div><div class="t" id="stN" style="left:883.7px;top:95.9px;font-size:16.5px;font-family:'Liberation Serif', serif;color:#333;font-weight:normal;font-style:normal;width:66px;overflow:hidden;">AaBbCcDd</div><div class="t" id="stNl" style="left:890.4px;top:125.9px;font-size:12px;font-family:'Liberation Sans', sans-serif;color:#666;font-weight:normal;font-style:normal;transform:scaleX(1.0753);">¶ Normal</div><div class="t" id="stS" style="left:961.9px;top:97.1px;font-size:15.5px;font-family:'Liberation Sans', sans-serif;color:#222;font-weight:bold;font-style:normal;width:67px;overflow:hidden;">AaBbCcDd</div><div class="t" id="stSl" style="left:976.2px;top:125.9px;font-size:12px;font-family:'Liberation Sans', sans-serif;color:#666;font-weight:normal;font-style:normal;transform:scaleX(1.0662);">Strong</div><div class="t" id="stNS" style="left:1040.5px;top:96.0px;font-size:16.5px;font-family:'Liberation Serif', serif;color:#555;font-weight:normal;font-style:normal;width:66.5px;overflow:hidden;">AaBbCcDd</div><div class="t" id="stNSl" style="left:1039.5px;top:125.9px;font-size:12px;font-family:'Liberation Sans', sans-serif;color:#666;font-weight:normal;font-style:normal;transform:scaleX(1.0226);">¶ No Spac...</div><div class="t" id="stH1" style="left:1118.5px;top:93.7px;font-size:21px;font-family:'Liberation Sans', sans-serif;color:#222;font-weight:normal;font-style:normal;width:66.5px;overflow:hidden;">AaBbCcDd</div><div class="t" id="stH1l" style="left:1122.4px;top:126.3px;font-size:12px;font-family:'Liberation Sans', sans-serif;color:#666;font-weight:normal;font-style:normal;transform:scaleX(1.0691);">Heading 1</div><div class="t" id="stH2" style="left:1196.5px;top:96.0px;font-size:17.5px;font-family:'Liberation Sans', sans-serif;color:#333;font-weight:normal;font-style:italic;width:67.5px;overflow:hidden;">AaBbCcDd</div><div class="t" id="stH2l" style="left:1201.3px;top:126.6px;font-size:12px;font-family:'Liberation Sans', sans-serif;color:#666;font-weight:normal;font-style:normal;transform:scaleX(1.0709);">Heading 2</div><div class="t" id="lblStyles" style="left:1027.4px;top:171.9px;font-size:11.3px;font-family:'Liberation Sans', sans-serif;color:#777;font-weight:normal;font-style:normal;transform:scaleX(0.9134);">Styles</div><div class="t" id="find" style="left:1341.3px;top:82.3px;font-size:11.8px;font-family:'Liberation Sans', sans-serif;color:#505050;font-weight:normal;font-style:normal;transform:scaleX(1.0587);">Find</div><div class="t" id="replace" style="left:1343.3px;top:110.6px;font-size:11.8px;font-family:'Liberation Sans', sans-serif;color:#505050;font-weight:normal;font-style:normal;transform:scaleX(1.0070);">Replace</div><div class="t" id="select" style="left:1343.1px;top:139.8px;font-size:11.8px;font-family:'Liberation Sans', sans-serif;color:#505050;font-weight:normal;font-style:normal;transform:scaleX(1.0550);">Select</div><div class="t" id="lblEdit" style="left:1337.0px;top:171.8px;font-size:11.3px;font-family:'Liberation Sans', sans-serif;color:#777;font-weight:normal;font-style:normal;transform:scaleX(0.9842);">Editing</div><div class="t" id="sPage" style="left:4.5px;top:939.0px;font-size:11.8px;font-family:'Liberation Sans', sans-serif;color:#555;font-weight:normal;font-style:normal;transform:scaleX(0.9278);">Page 7 of 8</div><div class="t" id="sWords" style="left:79.4px;top:938.8px;font-size:11.8px;font-family:'Liberation Sans', sans-serif;color:#555;font-weight:normal;font-style:normal;transform:scaleX(0.9312);">227 of 3081 words</div><div class="t" id="sLang" style="left:189.2px;top:938.5px;font-size:11.8px;font-family:'Liberation Sans', sans-serif;color:#555;font-weight:normal;font-style:normal;transform:scaleX(0.9274);">English (United States)</div><div class="t" id="zoom" style="left:1451.3px;top:938.2px;font-size:11px;font-family:'Liberation Sans', sans-serif;color:#666;font-weight:normal;font-style:normal;transform:scaleX(0.9595);">100%</div><div class="t" id="ac" style="left:880.7px;top:977.0px;font-size:13.5px;font-family:'Liberation Sans', sans-serif;color:#fff;font-weight:normal;font-style:normal;transform:scaleX(1.0526);">A/C</div><div class="t" id="weather" style="left:1041.6px;top:978.0px;font-size:14.5px;font-family:'Liberation Sans', sans-serif;color:#dfe6e6;font-weight:normal;font-style:normal;transform:scaleX(1.0315);">23°C  Nắng rải rác</div><div class="t" id="eng" style="left:1322.9px;top:968.7px;font-size:12.5px;font-family:'Liberation Sans', sans-serif;color:#dfe6e6;font-weight:normal;font-style:normal;transform:scaleX(0.9116);">ENG</div><div class="t" id="us" style="left:1328.0px;top:987.3px;font-size:12.5px;font-family:'Liberation Sans', sans-serif;color:#dfe6e6;font-weight:normal;font-style:normal;transform:scaleX(0.8345);">US</div><div class="t" id="time" style="left:1368.3px;top:969.1px;font-size:12.5px;font-family:'Liberation Sans', sans-serif;color:#dfe6e6;font-weight:normal;font-style:normal;transform:scaleX(0.9965);">2:03 PM</div><div class="t" id="date" style="left:1362.1px;top:987.6px;font-size:12.5px;font-family:'Liberation Sans', sans-serif;color:#dfe6e6;font-weight:normal;font-style:normal;transform:scaleX(1.0574);">2/23/2023</div></div></body></html>
